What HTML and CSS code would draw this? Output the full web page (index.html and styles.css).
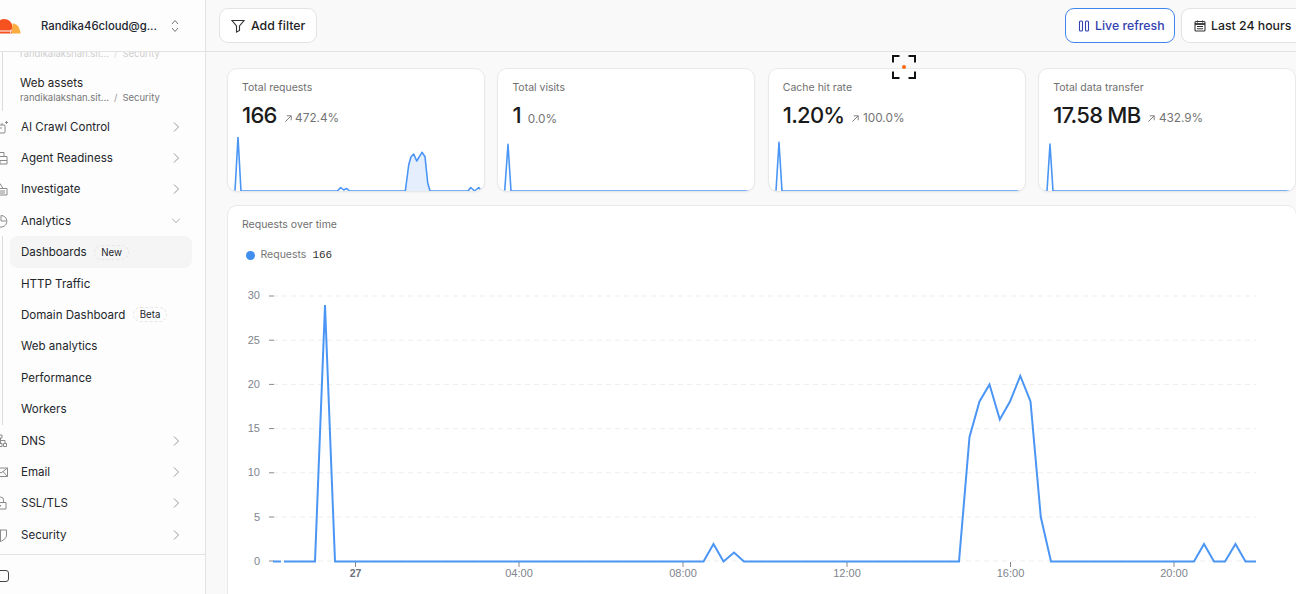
FILE: index.html
```html
<!DOCTYPE html>
<html lang="en">
<head>
<meta charset="utf-8">
<title>Dashboards</title>
<link rel="stylesheet" href="styles.css">
</head>
<body>
<div class="app">
  <aside class="sidebar">
    <div class="account">
      <svg class="logo" viewBox="0 0 30 16"><path fill="#f6521f" d="M1 15.500c-1-3 .5-6 3.500-6.500C6 4 9.500 1 13 1c4.500 0 8 3 8.500 7.500.5 2.500 0 5-.8 7z"/><path fill="#fbad41" d="M21.500 5.500c3.500 0 6.500 2.500 7.500 7 .3 1 .5 2 .5 3H20.500c.8-3 1-6.500 1-10z"/><path fill="#fff" d="M0 12.500h19l2-1.500-1 4-1 0 .5-1.500H0z"/></svg>
      <span class="account-name">Randika46cloud@g...</span>
      <svg class="updown" viewBox="0 0 10 14"><path d="M2 5l3-3.500L8 5M2 9l3 3.500L8 9"/></svg>
    </div>
    <nav class="nav">
      <div class="subgroup subgroup-top">
        <div class="asset asset-faded">
          <span class="asset-title">Web assets</span>
          <span class="asset-path"><span>randikalakshan.sit...</span><i>/</i><span>Security</span></span>
        </div>
        <div class="asset">
          <span class="asset-title">Web assets</span>
          <span class="asset-path"><span>randikalakshan.sit...</span><i>/</i><span>Security</span></span>
        </div>
      </div>
      <a class="row"><svg class="ico" viewBox="0 0 14 14"><rect x="1" y="5" width="10" height="8" rx="1"/><path d="M3 5V3M8 5V3M4 8h4M12.500 1v3M11 2.500h3"/></svg><span>AI Crawl Control</span><svg class="chev" viewBox="0 0 8 12"><path d="M2 1.500L6.500 6 2 10.500"/></svg></a>
      <a class="row"><svg class="ico" viewBox="0 0 14 14"><path d="M1 1.500h9v4H1zM6 5.500h7v7.500H1V7.500M1 9.500h12M6 9.500v3.500"/></svg><span>Agent Readiness</span><svg class="chev" viewBox="0 0 8 12"><path d="M2 1.500L6.500 6 2 10.500"/></svg></a>
      <a class="row"><svg class="ico" viewBox="0 0 14 14"><path d="M2 1.500h4l3 5H2zM2 3.500v3M0 6.500h13v6.500H0zM3 9h8M3 11h8"/></svg><span>Investigate</span><svg class="chev" viewBox="0 0 8 12"><path d="M2 1.500L6.500 6 2 10.500"/></svg></a>
      <a class="row"><svg class="ico" viewBox="0 0 14 14"><path d="M7 1.500a5.800 5.800 0 1 1-5.500 7.500"/><path d="M7 1.500V7h5.500"/></svg><span>Analytics</span><svg class="chev chev-open" viewBox="0 0 12 8"><path d="M1.500 2L6 6.500 10.500 2"/></svg></a>
      <div class="subgroup">
        <a class="row sub active"><span>Dashboards</span><em class="tag">New</em></a>
        <a class="row sub"><span>HTTP Traffic</span></a>
        <a class="row sub"><span>Domain Dashboard</span><em class="tag">Beta</em></a>
        <a class="row sub"><span>Web analytics</span></a>
        <a class="row sub"><span>Performance</span></a>
        <a class="row sub"><span>Workers</span></a>
      </div>
      <a class="row"><svg class="ico" viewBox="0 0 14 14"><path d="M5 1h3v3H5zM6.500 4v5M2 9V6.500h9V9M.5 9.500h3v3h-3zM5 9.500h3v3H5zM9.500 9.500h3v3h-3z"/></svg><span>DNS</span><svg class="chev" viewBox="0 0 8 12"><path d="M2 1.500L6.500 6 2 10.500"/></svg></a>
      <a class="row"><svg class="ico" viewBox="0 0 14 14"><path d="M.5 3h13v8.500H.5zM.5 3L7 8l6.500-5M.5 11.500L5 6.500M13.500 11.500L9 6.500"/></svg><span>Email</span><svg class="chev" viewBox="0 0 8 12"><path d="M2 1.500L6.500 6 2 10.500"/></svg></a>
      <a class="row"><svg class="ico" viewBox="0 0 14 14"><path d="M1 6.500h11V13H1zM3.500 6.500V4a3 3 0 0 1 6 0v2.500M6.500 9v1.500"/></svg><span>SSL/TLS</span><svg class="chev" viewBox="0 0 8 12"><path d="M2 1.500L6.500 6 2 10.500"/></svg></a>
      <a class="row"><svg class="ico" viewBox="0 0 14 14"><path d="M.5 2h12v5c0 3-2.500 5-6 6.500C3 12 .5 10 .5 7zM6.500 2v11.500"/></svg><span>Security</span><svg class="chev" viewBox="0 0 8 12"><path d="M2 1.500L6.500 6 2 10.500"/></svg></a>
    </nav>
    <div class="side-foot"><span class="collapse"></span></div>
  </aside>

  <main class="main">
    <header class="toolbar">
      <button class="btn btn-filter"><svg class="btn-ico" viewBox="0 0 14 14"><path d="M1 1.500h12L8.500 7v4.500l-3 1.500V7z"/></svg>Add filter</button>
      <div class="toolbar-right">
        <button class="btn btn-live"><svg class="btn-ico" viewBox="0 0 14 14"><rect x="2.500" y="2" width="3" height="10" rx="1"/><rect x="8.500" y="2" width="3" height="10" rx="1"/></svg>Live refresh</button>
        <button class="btn btn-range"><svg class="btn-ico" viewBox="0 0 14 14"><rect x="2" y="2.500" width="10" height="9.500" rx="1"/><path d="M2 5h10" class="thick"/><path d="M4.500 1.500v2M9.500 1.500v2M4 7.500h6M4 9.800h6"/></svg>Last 24 hours</button>
      </div>
    </header>

    <div class="content">
      <section class="stats">
        <article class="card">
          <h3 class="card-title">Total requests</h3>
          <div class="metric"><strong>166</strong><span class="delta"><svg class="arrow" viewBox="0 0 10 10"><path d="M1.500 8.500L8 2M3 2h5v5"/></svg>472.4%</span></div>
          <svg class="spark" viewBox="227 137 258 54"><path class="spark-fill" d="M405.300 191L408.700 165 411 156.700 413.700 154 416.700 161 422 152.300 425 156.700 427.700 182.700 430 191z"/><polyline class="spark-line" points="227,191 235,191 238,137 241,191 337.500,191 340.700,187.500 343.700,190 346.700,188.500 349.500,191 405.300,191 408.700,165 411,156.700 413.700,154 416.700,161 422,152.300 425,156.700 427.700,182.700 430,191 468,191 470.700,187.500 474.700,191 478.700,187.500 481.500,191 485,191"/></svg>
        </article>
        <article class="card">
          <h3 class="card-title">Total visits</h3>
          <div class="metric"><strong>1</strong><span class="delta">0.0%</span></div>
          <svg class="spark" viewBox="498 137 258 54"><polyline class="spark-line" points="498,191 505.700,191 509,144.300 512,191 756,191"/></svg>
        </article>
        <article class="card">
          <h3 class="card-title">Cache hit rate</h3>
          <div class="metric"><strong>1.20%</strong><span class="delta"><svg class="arrow" viewBox="0 0 10 10"><path d="M1.500 8.500L8 2M3 2h5v5"/></svg>100.0%</span></div>
          <svg class="spark" viewBox="768 137 258 54"><polyline class="spark-line" points="768,191 776,191 779,142.300 782,191 1026,191"/></svg>
        </article>
        <article class="card">
          <h3 class="card-title">Total data transfer</h3>
          <div class="metric"><strong>17.58 MB</strong><span class="delta"><svg class="arrow" viewBox="0 0 10 10"><path d="M1.500 8.500L8 2M3 2h5v5"/></svg>432.9%</span></div>
          <svg class="spark" viewBox="1038 137 258 54"><polyline class="spark-line" points="1038,191 1047,191 1050,144 1053,191 1296,191"/></svg>
        </article>
      </section>

      <section class="chart-card">
        <h3 class="chart-title">Requests over time</h3>
        <div class="legend"><span class="legend-dot"></span><span class="legend-name">Requests</span><span class="legend-value">166</span></div>
        <svg class="chart" viewBox="228 270 1068 324">
          <g class="grid">
            <path d="M273 296H1256M273 340.200H1256M273 384.400H1256M273 428.600H1256M273 472.800H1256M273 517H1256M273 561H1256"/>
          </g>
          <g class="ticks">
            <path d="M269 296h5M269 340.200h5M269 384.400h5M269 428.600h5M269 472.800h5M269 517h5M269 561h5M355.500 562v5M519 562v5M683 562v5M847 562v5M1010.500 562v5M1174 562v5"/>
          </g>
          <g class="y-labels">
            <text x="260" y="299">30</text>
            <text x="260" y="343.500">25</text>
            <text x="260" y="387.700">20</text>
            <text x="260" y="432">15</text>
            <text x="260" y="476">10</text>
            <text x="260" y="520.500">5</text>
            <text x="260" y="564.500">0</text>
          </g>
          <g class="x-labels">
            <text class="x-bold" x="355.500" y="577">27</text>
            <text x="519" y="577">04:00</text>
            <text x="683" y="577">08:00</text>
            <text x="847" y="577">12:00</text>
            <text x="1010.500" y="577">16:00</text>
            <text x="1174" y="577">20:00</text>
          </g>
          <path class="line" d="M273 561.500H281"/>
          <polyline class="line" points="284,561.500 315,561.500 325,305 335,561.500 703.500,561.500 713.500,544 723.500,561.500 734,552.500 744,561.500 959,561.500 969.500,437 979.500,401.500 989.500,384.500 999.800,419.500 1010,401.500 1020.300,376 1030.500,401.500 1040.800,517 1051,561.500 1194,561.500 1204,544 1214,561.500 1225,561.500 1235.500,544 1245.500,561.500 1256,561.500"/>
        </svg>
      </section>
    </div>
  </main>
</div>

<svg class="focus" viewBox="0 0 24 24">
  <path class="focus-halo" d="M1 7.500V1H7.500M16.500 1H23V7.500M23 16.500V23H16.500M7.500 23H1V16.500"/>
  <path class="focus-mark" d="M1 7.500V1H7.500M16.500 1H23V7.500M23 16.500V23H16.500M7.500 23H1V16.500"/>
  <circle class="focus-dot" cx="12" cy="12" r="2"/>
</svg>
</body>
</html>
```
FILE: styles.css
```css
* { box-sizing: border-box; }
html, body { margin: 0; height: 100%; overflow: hidden; }
body {
  font-family: "Inter", "Liberation Sans", sans-serif;
  color: #1f1f1f;
  background: #f9f9f9;
  position: relative;
}
.app { display: flex; height: 594px; }

/* Sidebar */
.sidebar {
  width: 206px;
  flex: none;
  display: flex;
  flex-direction: column;
  background: #fdfdfd;
  border-right: 1px solid #e3e3e3;
  overflow: hidden;
}
.account {
  height: 52px;
  flex: none;
  display: flex;
  align-items: center;
  border-bottom: 1px solid #e3e3e3;
}
.logo { width: 30px; height: 16px; margin-left: -9px; flex: none; }
.account-name { margin-left: 20px; font-size: 11.300px; font-weight: 500; white-space: nowrap; color: #22262e; }
.updown { width: 10px; height: 14px; margin-left: 13px; flex: none; fill: none; stroke: #777; stroke-width: 1; }

.nav { flex: 1; min-height: 0; overflow: hidden; }
.subgroup { margin-left: 2px; border-left: 1px solid #dcdcdc; }
.subgroup-top { margin-top: -29.100px; }
.asset {
  height: 44px;
  padding: 2px 0 0 17px;
  display: flex;
  flex-direction: column;
  justify-content: center;
  gap: 1.500px;
}
.asset-faded { opacity: .35; }
.asset-title { font-size: 11.550px; line-height: 15px; }
.asset-path { font-size: 9.500px; line-height: 12px; color: #777; display: flex; gap: 5px; white-space: nowrap; }
.asset-path i { font-style: normal; color: #999; }

.row {
  height: 31.400px;
  display: flex;
  align-items: center;
  font-size: 11.550px;
  color: #23262b;
  padding-right: 25px;
  white-space: nowrap;
}
.ico {
  width: 14px;
  height: 14px;
  margin-left: -6px;
  margin-right: 13px;
  flex: none;
  fill: none;
  stroke: #8a8a8a;
  stroke-width: 1;
}
.chev { width: 8px; height: 12px; margin-left: auto; flex: none; fill: none; stroke: #999; stroke-width: 1; }
.chev-open { width: 10px; height: 7px; margin-right: -1px; }
.sub { padding-left: 18px; margin-right: 13px; padding-right: 0; }
.active { background: #f5f5f5; border-radius: 8px; margin-left: 7px; padding-left: 11px; }
.tag {
  margin-left: 7.500px;
  padding: 0 6px;
  height: 15px;
  line-height: 13px;
  font-style: normal;
  font-size: 9.700px;
  border: 1px dashed #e6e6e6;
  border-radius: 8px;
}
.side-foot {
  height: 40px;
  flex: none;
  margin-top: auto;
  display: flex;
  align-items: center;
  border-top: 1px solid #e3e3e3;
}
.collapse {
  width: 14px;
  height: 12px;
  margin-left: -5px;
  margin-top: 2px;
  border: 1px solid #444;
  border-radius: 3px;
}

/* Main */
.main { flex: 1; min-width: 0; display: flex; flex-direction: column; overflow: hidden; }
.toolbar {
  height: 52px;
  flex: none;
  display: flex;
  justify-content: space-between;
  align-items: flex-start;
  padding: 8px 0 0 13px;
  border-bottom: 1px solid #e3e3e3;
}
.toolbar-right { display: flex; gap: 6px; margin-right: -5px; }
.btn {
  height: 35px;
  display: flex;
  align-items: center;
  gap: 5px;
  padding: 0 11px 0 11px;
  font: 500 12.300px "Inter", "Liberation Sans", sans-serif;
  color: #1f1f1f;
  background: #fff;
  border: 1px solid #e3e3e3;
  border-radius: 9px;
  white-space: nowrap;
}
.btn-filter { gap: 6px; }
.btn-ico { width: 14px; height: 14px; flex: none; fill: none; stroke: #333; stroke-width: 1.100; }
.thick { stroke-width: 1.800; }
.btn-live { color: #3340b0; border-color: #3f85f0; width: 110px; gap: 4px; }
.btn-live .btn-ico { stroke: #3340b0; }
.btn-range { width: 120px; gap: 4px; border-right: 0; border-radius: 9px 0 0 9px; }

.content { flex: 1; min-height: 0; padding: 16px 0 0 21px; }
.stats { display: grid; grid-template-columns: repeat(4, 258px); column-gap: 12.400px; }
.card {
  height: 124px;
  display: flex;
  flex-direction: column;
  background: #fff;
  border: 1px solid #e9e9e9;
  border-radius: 10px;
  box-shadow: 0 1px 2px rgba(0, 0, 0, .04);
  overflow: hidden;
}
.card-title { margin: 12px 0 0 14px; font-size: 10.500px; line-height: 13px; font-weight: 400; color: #6f6f6f; }
.metric { margin: 6.500px 0 0 14px; display: flex; align-items: baseline; gap: 7px; }
.metric strong { font-size: 22px; line-height: 28px; font-weight: 500; letter-spacing: -.75px; color: #1a1a1a; }
.delta { display: flex; align-items: center; gap: 2.500px; font-size: 11.800px; color: #747474; }
.arrow { width: 9px; height: 9px; fill: none; stroke: #747474; stroke-width: 1; }
.spark { width: 258px; height: 54px; margin: auto 0 0 -1px; flex: none; display: block; }
.spark-line { fill: none; stroke: #4b96f5; stroke-width: 1.600; stroke-linejoin: round; }
.spark-fill { fill: #e4eefc; }

.chart-card {
  margin-top: 13px;
  width: 1070px;
  height: 420px;
  background: #fff;
  border: 1px solid #e9e9e9;
  border-radius: 10px;
}
.chart-title { margin: 12px 0 0 14px; font-size: 10.500px; line-height: 13px; font-weight: 400; color: #6f6f6f; }
.legend { margin: 17px 0 0 17.500px; display: flex; align-items: center; font-size: 10.500px; line-height: 14px; height: 14px; }
.legend-dot { width: 9px; height: 9px; border-radius: 50%; background: #3f8ef0; margin: 1px 6px 0 0; }
.legend-name { color: #777; }
.legend-value { margin-left: 6px; color: #333; font-family: "Liberation Mono", monospace; font-size: 11px; }
.chart { display: block; width: 1068px; height: 324px; margin-top: 8px; }
.grid path { fill: none; stroke: #ededed; stroke-width: 1; stroke-dasharray: 5 4; }
.ticks path { fill: none; stroke: #8a8a8a; stroke-width: 1; }
.y-labels text, .x-labels text { font-family: "Liberation Sans", sans-serif; font-size: 11px; fill: #80858d; }
.y-labels text { text-anchor: end; }
.x-labels text { text-anchor: middle; }
.x-labels .x-bold { font-weight: 700; fill: #6e727a; font-size: 10.500px; }
.line { fill: none; stroke: #4b96f5; stroke-width: 2; stroke-linejoin: miter; }

/* Overlay */
.focus { position: absolute; left: 892px; top: 55px; width: 24px; height: 24px; overflow: visible; }
.focus-halo { fill: none; stroke: rgba(255, 255, 255, .9); stroke-width: 4; }
.focus-mark { fill: none; stroke: #111; stroke-width: 2; }
.focus-dot { fill: #f96a10; }
```
